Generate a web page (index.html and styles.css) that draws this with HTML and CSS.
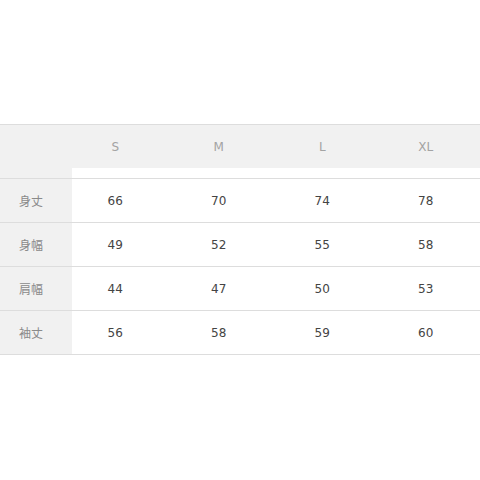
FILE: index.html
```html
<!DOCTYPE html>
<html lang="ja">
<head>
<meta charset="utf-8">
<title>サイズ表</title>
<link rel="stylesheet" href="styles.css">
</head>
<body>
<div class="wrap">
  <div class="size-table">
    <div class="cell head corner"></div>
    <div class="cell head">S</div>
    <div class="cell head">M</div>
    <div class="cell head">L</div>
    <div class="cell head">XL</div>

    <div class="cell spacer label"></div>
    <div class="cell spacer"></div>
    <div class="cell spacer"></div>
    <div class="cell spacer"></div>
    <div class="cell spacer"></div>

    <div class="cell label">身丈</div>
    <div class="cell val">66</div>
    <div class="cell val">70</div>
    <div class="cell val">74</div>
    <div class="cell val">78</div>

    <div class="cell label">身幅</div>
    <div class="cell val">49</div>
    <div class="cell val">52</div>
    <div class="cell val">55</div>
    <div class="cell val">58</div>

    <div class="cell label">肩幅</div>
    <div class="cell val">44</div>
    <div class="cell val">47</div>
    <div class="cell val">50</div>
    <div class="cell val">53</div>

    <div class="cell label">袖丈</div>
    <div class="cell val">56</div>
    <div class="cell val">58</div>
    <div class="cell val">59</div>
    <div class="cell val">60</div>
  </div>
</div>
</body>
</html>
```
FILE: styles.css
```css
html, body {
  margin: 0;
  padding: 0;
  background: #ffffff;
}

.wrap {
  width: 480px;
  height: 480px;
  overflow: hidden;
  padding-top: 124px;
  box-sizing: border-box;
}

.size-table {
  display: grid;
  grid-template-columns: 72px repeat(4, 103.5px);
  width: 486px;
  font-family: "DejaVu Sans", Verdana, "Noto Sans CJK JP", sans-serif;
  font-size: 12px;
}

.cell {
  display: flex;
  align-items: center;
  justify-content: center;
  padding-right: 17px;
  height: 43px;
  border-bottom: 1px solid #dddddd;
  color: #444444;
}

.head {
  background: #f1f1f1;
  border-top: 1px solid #dddddd;
  border-bottom: none;
  color: #a3a3a3;
}

.spacer {
  height: 10px;
  background: #ffffff;
}

.label {
  background: #f1f1f1;
  justify-content: flex-start;
  padding-right: 0;
  padding-left: 19px;
  font-family: "Noto Sans CJK JP", sans-serif;
  color: #8a8a8a;
}

.spacer.label {
  background: #f1f1f1;
}
```
